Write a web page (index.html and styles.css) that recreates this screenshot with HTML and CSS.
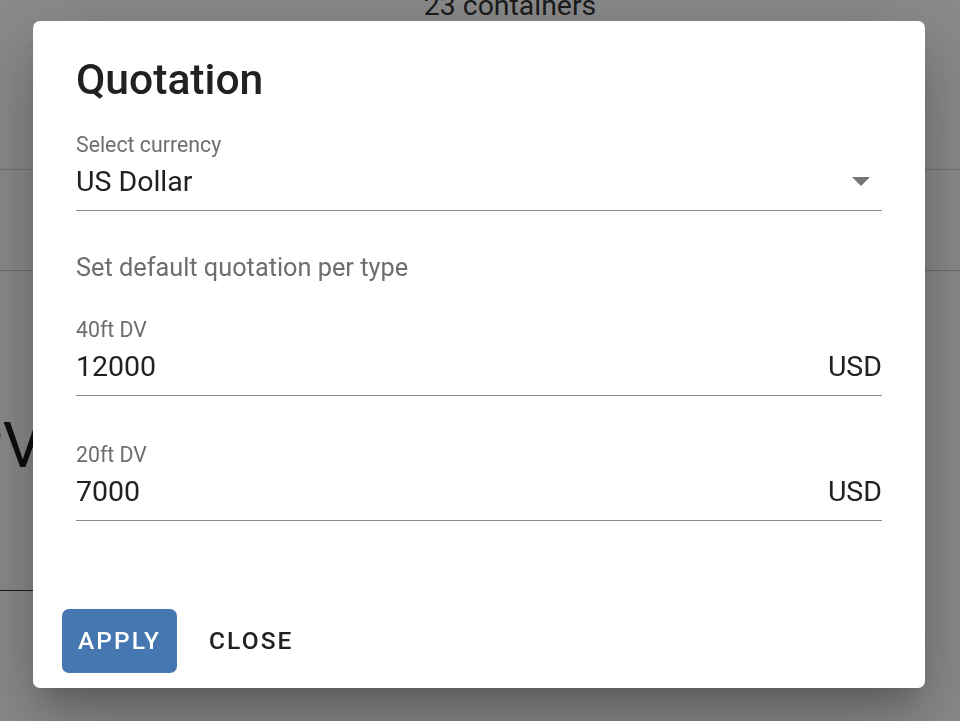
FILE: index.html
```html
<!DOCTYPE html>
<html lang="en">
<head>
<meta charset="utf-8">
<title>Quotation</title>
<link rel="stylesheet" href="styles.css">
</head>
<body>
<div class="page">
  <div class="bg-head"><span class="bg-count">23 containers</span></div>
  <div class="bg-row"></div>
  <div class="bg-title">PV</div>
  <div class="bg-line"></div>
</div>
<div class="backdrop"></div>
<div class="dialog" role="dialog" aria-labelledby="dlg-title">
  <h2 class="dialog-title" id="dlg-title">Quotation</h2>
  <div class="dialog-content">
    <div class="field">
      <div class="field-label">Select currency</div>
      <div class="field-input">
        <span class="field-value">US Dollar</span>
        <svg class="select-arrow" width="18" height="9" viewBox="0 0 18 9" aria-hidden="true"><polygon points="0,0 18,0 9,9"/></svg>
      </div>
    </div>
    <p class="section-text">Set default quotation per type</p>
    <div class="field">
      <div class="field-label">40ft DV</div>
      <div class="field-input">
        <span class="field-value">12000</span>
        <span class="field-adorn">USD</span>
      </div>
    </div>
    <div class="field field-gap">
      <div class="field-label">20ft DV</div>
      <div class="field-input">
        <span class="field-value">7000</span>
        <span class="field-adorn">USD</span>
      </div>
    </div>
  </div>
  <div class="dialog-actions">
    <button class="btn btn-contained" type="button">Apply</button>
    <button class="btn btn-text" type="button">Close</button>
  </div>
</div>
</body>
</html>
```
FILE: styles.css
```css
* { box-sizing: border-box; }
html, body {
  margin: 0;
  padding: 0;
  width: 960px;
  height: 721px;
  overflow: hidden;
  background: #fff;
  font-family: Roboto, "Liberation Sans", Arial, sans-serif;
}
.page {
  display: flex;
  flex-direction: column;
  color: #212121;
}
.bg-head {
  height: 170px;
  border-bottom: 1px solid #d6d6d6;
  display: flex;
  justify-content: center;
}
.bg-count {
  font-size: 28.4px;
  line-height: 28px;
  margin-top: -8px;
  color: #333;
  padding-left: 60px;
}
.bg-row {
  height: 101px;
  border-bottom: 1px solid #c8c8c8;
}
.bg-title {
  margin-top: 143px;
  margin-left: -37px;
  font-size: 63px;
  line-height: 63px;
  color: #1a1a1a;
}
.bg-line {
  margin-top: 113px;
  width: 420px;
  border-top: 1px solid #333;
}
.backdrop {
  position: fixed;
  inset: 0;
  background: rgba(0, 0, 0, 0.46);
}
.dialog {
  position: fixed;
  left: 33px;
  top: 21px;
  width: 892px;
  height: 667px;
  background: #fff;
  border-radius: 7px;
  box-shadow: 0 19px 26px -12px rgba(0,0,0,0.2), 0 42px 66px 5px rgba(0,0,0,0.14), 0 16px 80px 14px rgba(0,0,0,0.12);
  display: flex;
  flex-direction: column;
}
.dialog-title {
  margin: 0;
  padding: 33px 43px 0 43px;
  font-size: 42.6px;
  line-height: 50px;
  font-weight: 500;
  color: #212121;
}
.dialog-content {
  padding: 29px 43px 0 43px;
  display: flex;
  flex-direction: column;
}
.field {
  display: flex;
  flex-direction: column;
  border-bottom: 1px solid #8c8c8c;
  padding-bottom: 11px;
}
.field-gap { margin-top: 47px; }
.field-label {
  font-size: 21.3px;
  line-height: 24px;
  color: #6e6e6e;
}
.field-input {
  margin-top: 8px;
  display: flex;
  justify-content: space-between;
  align-items: flex-start;
}
.field-value, .field-adorn {
  font-size: 28.5px;
  line-height: 34px;
  color: #212121;
}
.select-arrow {
  fill: #757575;
  margin-top: 12px;
  margin-right: 12px;
}
.section-text {
  margin: 42px 0 35px;
  font-size: 25.3px;
  line-height: 30px;
  color: #6e6e6e;
}
.dialog-actions {
  margin-top: auto;
  padding: 0 29px 15px;
  display: flex;
  align-items: center;
}
.btn {
  font-family: Roboto, "Liberation Sans", Arial, sans-serif;
  font-size: 24.5px;
  font-weight: 500;
  text-transform: uppercase;
  letter-spacing: 2.1px;
  line-height: 30px;
  border: 0;
  cursor: pointer;
  height: 64px;
  border-radius: 7px;
}
.btn-contained {
  width: 115px;
  background: #4677b1;
  color: #fff;
  padding: 0;
}
.btn-text {
  margin-left: 18px;
  padding: 0 14px;
  background: transparent;
  color: #212121;
}
```
